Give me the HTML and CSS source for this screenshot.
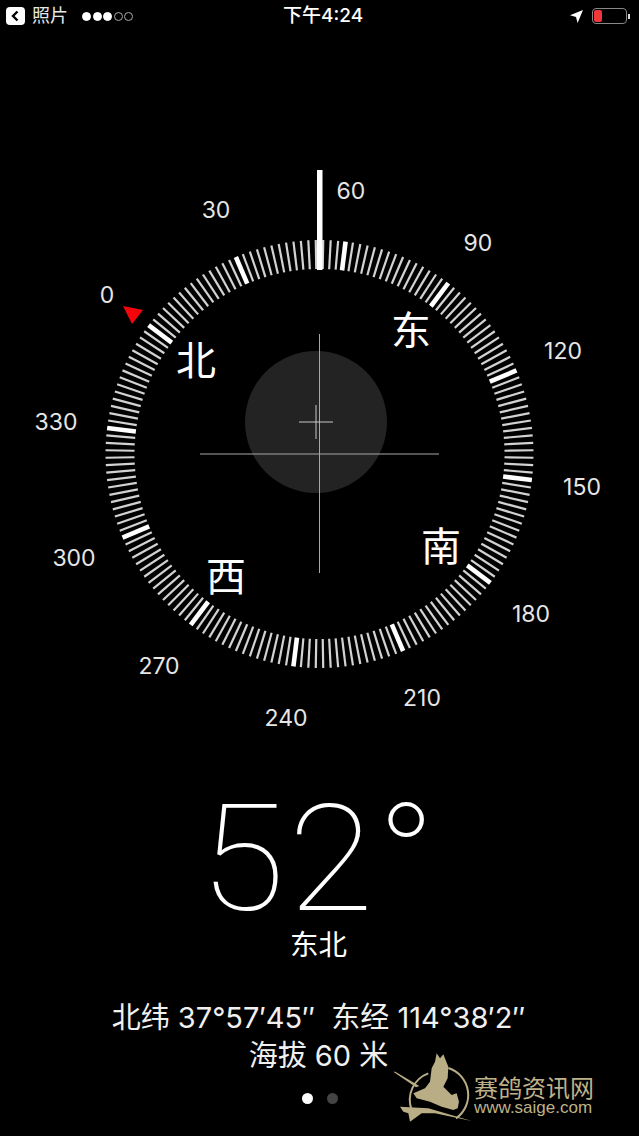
FILE: index.html
```html
<!DOCTYPE html>
<html lang="zh">
<head>
<meta charset="utf-8">
<title>指南针</title>
<link rel="stylesheet" href="styles.css">
</head>
<body>
<div class="screen">
  <header class="status">
    <div class="status-left">
      <svg class="back" viewBox="0 0 19 18"><rect width="19" height="18" rx="4" fill="#fff"/><path d="M11.5 4.5 7 9l4.5 4.5" fill="none" stroke="#000" stroke-width="2.4"/></svg>
      <span class="app">照片</span>
      <span class="signal"><i class="on"></i><i class="on"></i><i class="on"></i><i></i><i></i></span>
    </div>
    <div class="time">下午4:24</div>
    <div class="status-right">
      <svg class="loc" viewBox="0 0 13 13"><path d="M13 0 7.6 13 6 7 0 5.2z" fill="#fff"/></svg>
      <span class="battery"><span class="level"></span></span>
      <span class="nub"></span>
    </div>
  </header>

  <svg class="dial" viewBox="0 140 639 600">
    <defs>
      <rect id="tick" class="tick" x="-1.1" y="-214" width="2.2" height="29"/>
      <g id="t10">
        <use href="#tick" transform="rotate(2)"/><use href="#tick" transform="rotate(4)"/><use href="#tick" transform="rotate(6)"/><use href="#tick" transform="rotate(8)"/>
      </g>
      <g id="t30">
        <rect class="tick-bold" x="-2.3" y="-214" width="4.6" height="29"/>
        <use href="#t10"/>
        <use href="#tick" transform="rotate(10)"/><use href="#t10" transform="rotate(10)"/>
        <use href="#tick" transform="rotate(20)"/><use href="#t10" transform="rotate(20)"/>
      </g>
      <g id="t90">
        <use href="#t30"/><use href="#t30" transform="rotate(30)"/><use href="#t30" transform="rotate(60)"/>
      </g>
    </defs>
    <circle class="disc" cx="316" cy="422" r="71"/>
    <g transform="translate(319.5 454) rotate(-53)">
      <use href="#t90"/><use href="#t90" transform="rotate(90)"/><use href="#t90" transform="rotate(180)"/><use href="#t90" transform="rotate(270)"/>
    </g>
    <rect class="lubber" x="317" y="170" width="5.5" height="100"/>
    <path class="cross" d="M319.5 334V573M200 454H439"/>
    <path class="cross-small" d="M316 405V439M299 422H333"/>
    <path class="north" d="M123 306 143 310 132 324z"/>
    <g class="num">
      <text x="107" y="303">0</text><text x="216" y="218">30</text><text x="351" y="199">60</text>
      <text x="478" y="251">90</text><text x="563" y="359">120</text><text x="582" y="495">150</text>
      <text x="531" y="622">180</text><text x="422" y="706">210</text><text x="286" y="726">240</text>
      <text x="159" y="674">270</text><text x="74" y="566">300</text><text x="56" y="430">330</text>
    </g>
    <g class="card">
      <text x="196" y="375">北</text><text x="411" y="345">东</text>
      <text x="441" y="561">南</text><text x="226" y="591">西</text>
    </g>
  </svg>

  <section class="readout">
    <div class="degrees">52°</div>
    <div class="dir">东北</div>
    <div class="coords">北纬 37°57′45″ &nbsp;东经 114°38′2″</div>
    <div class="alt">海拔 60 米</div>
  </section>

  <div class="pager"><i class="active"></i><i></i></div>

  <div class="mark">
    <svg class="mark-logo" viewBox="0 0 300 288">
      <path class="mark-ring" d="M205 84A85 85 0 0 1 228 235M145 100A85 85 0 0 0 95 210"/>
      <path class="mark-fill" d="M170 40 180 55 190 43 205 80 203 115 190 140 215 165 230 160 237 185 233 205 220 210 185 200 150 185 110 175 100 160 135 145 150 125 155 85 165 65z"/>
      <path class="mark-fill" d="M40 95 46 95 118 138 108 142z"/>
      <path class="mark-fill" d="M60 200 145 205 275 243 165 220 125 220 90 245 85 220 70 215z"/>
    </svg>
    <div class="mark-text">
      <div class="mark-cn">赛鸽资讯网</div>
      <div class="mark-en">www.saige.com</div>
    </div>
  </div>
</div>
</body>
</html>
```
FILE: styles.css
```css
* { box-sizing: border-box; }
html, body { margin: 0; background: #000; }
.screen {
  position: relative;
  width: 639px;
  height: 1136px;
  overflow: hidden;
  background: #000;
  color: #fff;
  font-family: "Inter", "Noto Sans CJK SC", sans-serif;
}
.status {
  position: relative;
  display: flex;
  justify-content: space-between;
  align-items: center;
  height: 32px;
  padding: 0 9px 0 6px;
}
.status-left { display: flex; align-items: center; }
.back { width: 19px; height: 18px; }
.app { margin-left: 7px; font-size: 18px; line-height: 26px; margin-top: -4px; color: #e8e8e8; font-family: "Noto Sans CJK SC", sans-serif; }
.signal { display: flex; gap: 1.5px; margin-left: 14px; }
.signal i { width: 9px; height: 9px; border-radius: 50%; border: 1px solid #aaa; }
.signal i.on { background: #fff; border-color: #fff; }
.time {
  position: absolute;
  left: 283px;
  top: 5px;
  font-size: 19px;
  font-weight: 500;
  line-height: 22px;
}
.status-right { display: flex; align-items: center; }
.loc { width: 13px; height: 13px; margin-right: 9px; }
.battery { display: block; width: 35px; height: 16px; padding: 1px; border: 1px solid #888; border-radius: 4px; }
.level { display: block; width: 8px; height: 100%; background: #f0383c; border-radius: 2px; }
.nub { width: 2px; height: 5px; margin-left: 1px; background: #ddd; }

.dial { display: block; width: 639px; height: 600px; margin-top: 108px; }
.disc { fill: #232323; }
.tick { fill: #d2d2d2; }
.tick-bold { fill: #fff; }
.lubber { fill: #fff; }
.cross { fill: none; stroke: #a8a8a8; stroke-width: 1; }
.cross-small { fill: none; stroke: #c8c8c8; stroke-width: 1; }
.north { fill: #f5040c; }
.num text { fill: #e6e6e6; font-size: 23px; text-anchor: middle; font-family: "Inter", sans-serif; }
.card text { fill: #fff; font-size: 40px; text-anchor: middle; font-family: "Noto Sans CJK SC", sans-serif; }

.readout { display: flex; flex-direction: column; align-items: center; padding-right: 2px; }
.degrees {
  margin-top: 53px;
  margin-left: 3px;
  height: 132px;
  font-family: "Roboto", sans-serif;
  font-size: 149px;
  line-height: 132px;
  font-weight: 100;
  letter-spacing: 3px;
  transform: scaleX(1.045);
}
.dir { font-size: 28.5px; line-height: 36px; font-family: "Noto Sans CJK SC", sans-serif; }
.coords { margin-top: 38px; font-size: 29px; line-height: 38px; color: #f0f0f0; }
.alt { font-size: 29px; line-height: 38px; color: #f0f0f0; }

.pager { display: flex; justify-content: center; gap: 14px; margin-top: 18px; }
.pager i { width: 11px; height: 11px; border-radius: 50%; background: #444; }
.pager i.active { background: #fff; }

.mark {
  position: absolute;
  left: 380px;
  top: 1040px;
  display: flex;
  align-items: flex-start;
  color: #bdb28a;
}
.mark-logo { width: 100px; height: 96px; flex: none; }
.mark-ring { fill: none; stroke: #b8ad84; stroke-width: 6; }
.mark-fill { fill: #b8ad84; }
.mark-text { margin: 34px 0 0 -6px; }
.mark-cn { font-size: 24px; line-height: 26px; font-family: "Noto Sans CJK SC", sans-serif; }
.mark-en { font-size: 17px; line-height: 16px; font-family: "Liberation Sans", sans-serif; }
```
